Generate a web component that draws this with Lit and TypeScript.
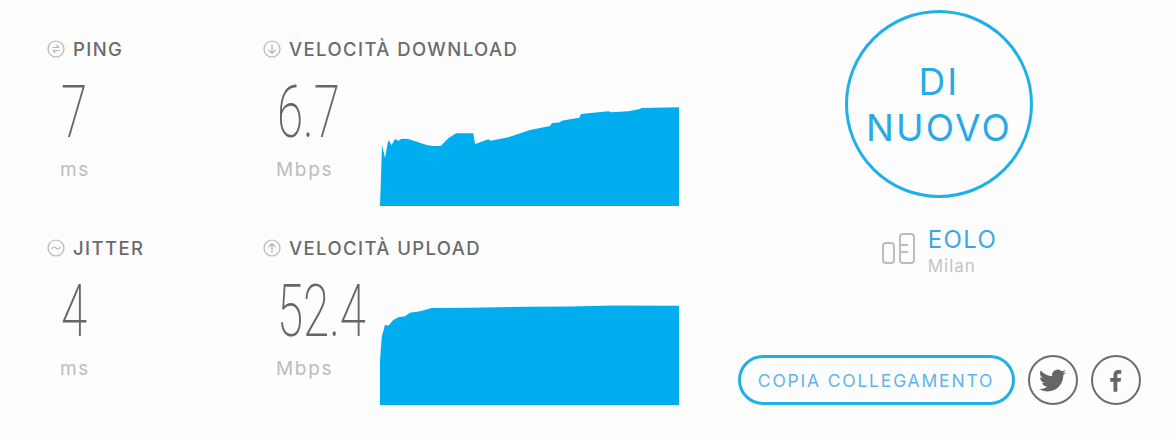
import { LitElement, css, html, svg } from 'lit';
import { customElement } from 'lit/decorators.js';

const DOWNLOAD_POINTS =
  '0,100 2,39 5,52 8.3,34 11.7,39 15,33 18.3,34.7 21.7,32.7 28.3,33 36.7,35.7 46.7,39 53.3,40 60.7,40 68.3,32.3 76,27.3 93.3,27.3 95,38 101.7,35.7 108.3,33.3 110.7,34.7 128.3,31.3 150,24 170,20 171.7,17.3 180,16.3 181.7,14.7 190,13.3 199.3,11.7 201,8 228.3,5.3 231.7,6.3 248.3,5.3 260,3 261.7,2 299,1.3 299,100';
const UPLOAD_POINTS =
  '0,100 0,55.7 1.7,32 5,19.7 8.3,20.7 13.3,15 18.3,12.3 25,11.3 30,7.7 40,6.3 51.7,3 90,2.7 146.7,1.7 190,1.4 233,0.4 299,0.7 299,100';

const ICONS = {
  ping: svg`<circle cx="9" cy="9" r="8"/><path d="M5.500 7.500h6.500M9.500 5l2.500 2.500M12.500 10.500H6M8.500 13L6 10.500"/>`,
  jitter: svg`<circle cx="9" cy="9" r="8"/><path d="M4.500 10c1.500-2.500 3-2.500 4.500-1s3 1.500 4.500-1"/>`,
  down: svg`<circle cx="9" cy="9" r="8"/><path d="M9 4.500v9M5.500 10L9 13.500 12.500 10"/>`,
  up: svg`<circle cx="9" cy="9" r="8"/><path d="M9 13.500v-9M5.500 8L9 4.500 12.500 8"/>`,
};

@customElement('app-root')
export class AppRoot extends LitElement {
  static styles = css`
    :host {
      display: flex;
      width: 1174px;
      height: 438px;
      background: #fdfdfd;
      font-family: Inter, 'Liberation Sans', sans-serif;
      overflow: hidden;
    }

    .metrics {
      width: 738px;
      box-sizing: border-box;
      padding: 38px 0 0 47px;
      display: grid;
      grid-template-columns: 216px 416px;
      grid-auto-rows: 199px;
      align-content: start;
    }

    .label {
      display: flex;
      align-items: center;
      gap: 8px;
      height: 22px;
      font-size: 18.500px;
      font-weight: 500;
      letter-spacing: 1.400px;
      color: #6b6b6b;
      white-space: nowrap;
    }

    .label svg {
      width: 18px;
      height: 18px;
      fill: none;
      stroke: #b4b4b4;
      stroke-width: 1.2;
    }

    .body {
      display: flex;
      height: 146px;
      align-items: flex-end;
    }

    .reading {
      flex: none;
      align-self: flex-start;
      width: 117px;
      box-sizing: border-box;
      padding: 16px 0 0 14px;
    }

    .value {
      height: 72px;
      font-family: Roboto, sans-serif;
      font-weight: 200;
      font-size: 73px;
      line-height: 72px;
      color: #666;
      transform: scaleX(0.65);
      transform-origin: left;
      white-space: nowrap;
    }

    .unit {
      margin-top: 10px;
      margin-left: -1px;
      font-size: 19px;
      letter-spacing: 1.700px;
      color: #bcbcbc;
    }

    .chart {
      display: block;
      flex: none;
      width: 299px;
      height: 100px;
      fill: #00adef;
    }

    .side {
      width: 402px;
      padding: 10px 0 33px;
      box-sizing: border-box;
      display: flex;
      flex-direction: column;
      align-items: center;
    }

    .go {
      width: 188px;
      height: 188px;
      box-sizing: border-box;
      padding-top: 2px;
      border: 3px solid #1fb0e8;
      border-radius: 50%;
      display: flex;
      align-items: center;
      justify-content: center;
      text-align: center;
      font-size: 37px;
      letter-spacing: 2.200px;
      line-height: 46px;
      color: #29a9e6;
    }

    .server {
      display: flex;
      align-items: flex-start;
      gap: 12px;
      margin-top: 30px;
    }

    .server svg {
      width: 35px;
      height: 32px;
      margin-top: 5px;
      fill: none;
      stroke: #bdbdbd;
      stroke-width: 2;
    }

    .server .name {
      font-size: 24px;
      letter-spacing: 1.400px;
      line-height: 24px;
      color: #3aa7e4;
    }

    .server .city {
      margin-top: 4px;
      font-size: 17px;
      letter-spacing: 1px;
      line-height: 20px;
      color: #c4c4c4;
    }

    .actions {
      margin-top: auto;
      display: flex;
      align-items: center;
      gap: 13px;
    }

    .copy {
      width: 277px;
      height: 50px;
      box-sizing: border-box;
      border: 3px solid #1fb0e8;
      border-radius: 25px;
      display: flex;
      align-items: center;
      justify-content: center;
      font-size: 17.500px;
      letter-spacing: 1.800px;
      color: #5fb4e8;
      white-space: nowrap;
    }

    .share {
      width: 50px;
      height: 50px;
      box-sizing: border-box;
      border: 2.500px solid #6d6d6d;
      border-radius: 50%;
      display: flex;
      align-items: center;
      justify-content: center;
    }

    .share svg {
      width: 27px;
      height: 27px;
      fill: #666;
    }
  `;

  private metric(icon: unknown, label: string, value: string, unit: string, points?: string) {
    return html`
      <div class="metric">
        <div class="label">
          <svg viewBox="0 0 18 18">${icon}</svg>
          ${label}
        </div>
        <div class="body">
          <div class="reading">
            <div class="value">${value}</div>
            <div class="unit">${unit}</div>
          </div>
          ${points
            ? html`<svg class="chart" viewBox="0 0 299 100"><polygon points=${points}></polygon></svg>`
            : ''}
        </div>
      </div>
    `;
  }

  render() {
    return html`
      <div class="metrics">
        ${this.metric(ICONS.ping, 'PING', '7', 'ms')}
        ${this.metric(ICONS.down, 'VELOCITÀ DOWNLOAD', '6.7', 'Mbps', DOWNLOAD_POINTS)}
        ${this.metric(ICONS.jitter, 'JITTER', '4', 'ms')}
        ${this.metric(ICONS.up, 'VELOCITÀ UPLOAD', '52.4', 'Mbps', UPLOAD_POINTS)}
      </div>
      <div class="side">
        <div class="go">DI<br />NUOVO</div>
        <div class="server">
          <svg viewBox="0 0 35 32">
            <rect x="2" y="10" width="11" height="20" rx="3"></rect>
            <rect x="19" y="1" width="14" height="29" rx="3"></rect>
            <path d="M20 12h7M20 19h7"></path>
          </svg>
          <div>
            <div class="name">EOLO</div>
            <div class="city">Milan</div>
          </div>
        </div>
        <div class="actions">
          <div class="copy">COPIA COLLEGAMENTO</div>
          <div class="share">
            <svg viewBox="0 0 24 24">
              <path d="M23.950 4.570a10 10 0 0 1-2.820.770 4.960 4.960 0 0 0 2.160-2.720c-.950.550-2 .950-3.130 1.180a4.920 4.920 0 0 0-8.380 4.480C7.690 8.090 4.070 6.130 1.640 3.160a4.820 4.820 0 0 0-.670 2.480c0 1.710.870 3.210 2.190 4.100a4.900 4.900 0 0 1-2.230-.620v.060a4.920 4.920 0 0 0 3.950 4.830 5 5 0 0 1-2.210.080 4.940 4.940 0 0 0 4.610 3.420A9.870 9.870 0 0 1 0 19.540a14 14 0 0 0 7.560 2.210c9.050 0 14-7.500 14-13.980 0-.210 0-.420-.020-.630a9.940 9.940 0 0 0 2.410-2.570z"></path>
            </svg>
          </div>
          <div class="share">
            <svg viewBox="0 0 24 24">
              <path d="M13.600 22v-8.800h2.900l.5-3.400h-3.400V7.600c0-1 .3-1.700 1.700-1.700h1.800V2.800c-.300 0-1.400-.1-2.600-.1-2.600 0-4.300 1.600-4.300 4.500v2.600H7.300v3.400h2.900V22z"></path>
            </svg>
          </div>
        </div>
      </div>
    `;
  }
}
